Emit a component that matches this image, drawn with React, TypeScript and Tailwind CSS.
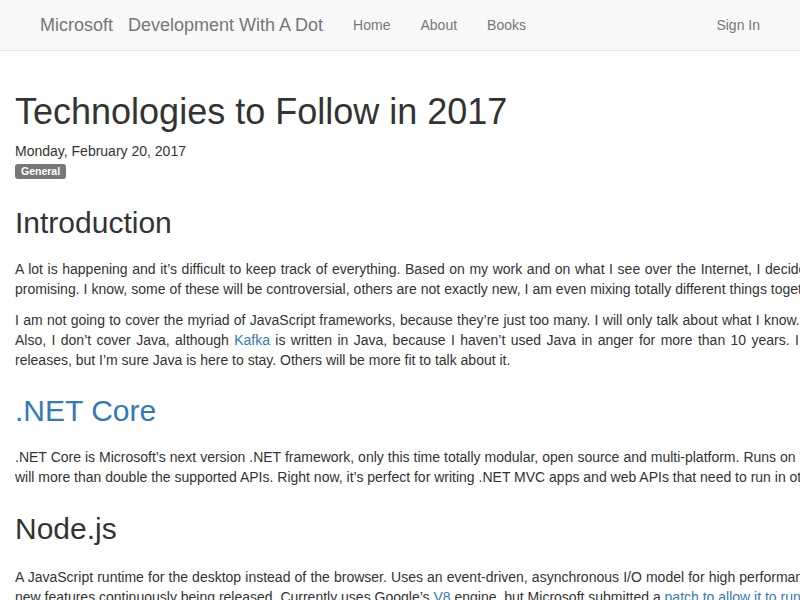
import React from "react";

const navLinks = ["Home", "About", "Books"];

// text is justified in the original page, so each visible line gets its own word spacing
const Line = ({
  children,
  className = "",
}: {
  children: React.ReactNode;
  className?: string;
}) => <span className={`block whitespace-nowrap ${className}`}>{children}</span>;

const Link = ({ children }: { children: React.ReactNode }) => (
  <a href="#" className="text-[#337ab7]">
    {children}
  </a>
);

const Heading = ({
  children,
  className = "",
}: {
  children: React.ReactNode;
  className?: string;
}) => (
  <h2 className={`text-[30px] leading-[33px] font-normal text-[#333] ${className}`}>
    {children}
  </h2>
);

const App = () => {
  return (
    <div className="h-screen w-full overflow-hidden bg-white font-['Liberation_Sans',Arial,sans-serif] text-[14px] leading-[20px] text-[#333]">
      <nav className="flex h-[51px] items-center border-b border-[#e7e7e7] bg-[#f8f8f8] px-[25px] text-[#777]">
        <a href="#" className="pl-[15px] pr-[15px] text-[18px] leading-[20px]">
          Microsoft
        </a>
        <a href="#" className="pr-[15px] text-[18px] leading-[20px]">
          Development With A Dot
        </a>
        <ul className="flex">
          {navLinks.map((l) => (
            <li key={l}>
              <a href="#" className="block px-[15px]">
                {l}
              </a>
            </li>
          ))}
        </ul>
        <a href="#" className="ml-auto px-[15px]">
          Sign In
        </a>
      </nav>

      <main className="w-[1170px] px-[15px] pt-[41px]">
        <h1 className="mb-[9px] text-[36px] leading-[1.1] font-normal">
          Technologies to Follow in 2017
        </h1>
        <div>Monday, February 20, 2017</div>
        <div className="flex">
          <span className="mt-[3px] inline-block rounded-[3px] bg-[#777] px-[6px] pt-[2px] pb-[3px] text-[10.5px] leading-none font-bold text-white">
            General
          </span>
        </div>

        <Heading className="mt-[27px] mb-[20px]">Introduction</Heading>
        <p className="mb-[11px]">
          <Line className="[word-spacing:0.7px]">
            A lot is happening and it’s difficult to keep track of everything. Based on my work and on what I see over the Internet, I decided to write about a few technologies that I find
          </Line>
          <Line className="[word-spacing:0.1px]">
            promising. I know, some of these will be controversial, others are not exactly new, I am even mixing totally different things together, but here they are.
          </Line>
        </p>
        <p className="mb-[10px]">
          <Line className="[word-spacing:0.4px]">
            I am not going to cover the myriad of JavaScript frameworks, because they’re just too many. I will only talk about what I know. So, no Angular, React, Vue, etc.
          </Line>
          <Line className="[word-spacing:1.5px]">
            Also, I don’t cover Java, although <Link>Kafka</Link> is written in Java, because I haven’t used Java in anger for more than 10 years. I know there are new
          </Line>
          <Line>releases, but I’m sure Java is here to stay. Others will be more fit to talk about it.</Line>
        </p>

        <Heading className="mt-[24px] mb-[20px]">
          <Link>.NET Core</Link>
        </Heading>
        <p className="mb-[10px]">
          <Line className="[word-spacing:0.1px]">
            .NET Core is Microsoft’s next version .NET framework, only this time totally modular, open source and multi-platform. Runs on Windows, Linux and macOS and version 2.0
          </Line>
          <Line>
            will more than double the supported APIs. Right now, it’s perfect for writing .NET MVC apps and web APIs that need to run in other operating systems.
          </Line>
        </p>

        <Heading className="mt-[25px] mb-[22px]">Node.js</Heading>
        <p className="mb-[10px]">
          <Line className="[word-spacing:0.25px]">
            A JavaScript runtime for the desktop instead of the browser. Uses an event-driven, asynchronous I/O model for high performance. Very active community, with lots of
          </Line>
          <Line>
            new features continuously being released. Currently uses Google’s <Link>V8</Link> engine, but Microsoft submitted a <Link>patch to allow it to run on Chakra</Link>.
          </Line>
        </p>
      </main>
    </div>
  );
};

export default App;
